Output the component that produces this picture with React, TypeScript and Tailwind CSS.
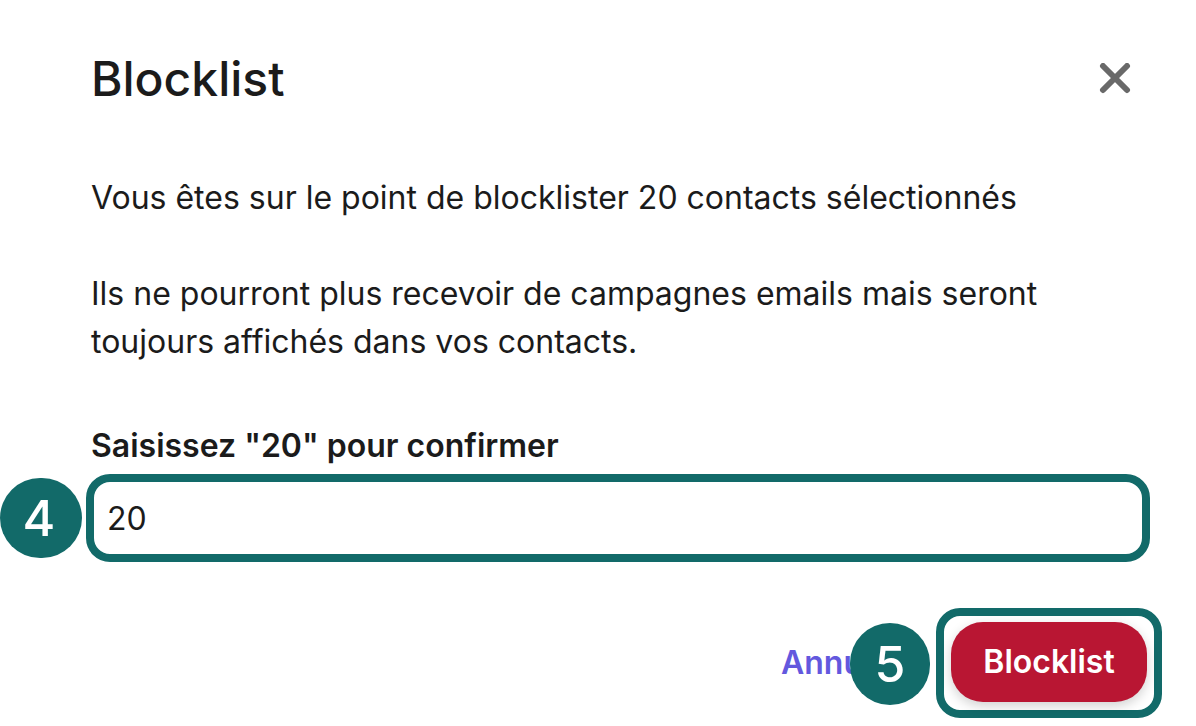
import { useState } from "react";

const stepBadge =
  "pointer-events-none absolute flex items-center justify-center rounded-full bg-[#126a69] text-[50px] font-medium text-white";

function App() {
  const [value, setValue] = useState("20");

  return (
    <div
      role="dialog"
      aria-labelledby="title"
      className="min-h-screen w-full bg-white pt-12 pr-[34px] pl-[86px] font-['Inter',sans-serif] text-[#1b1b1b]"
    >
      <header className="flex items-center justify-between pr-[27px] pl-[5px]">
        <h1 id="title" className="text-5xl leading-[62px] font-medium">
          Blocklist
        </h1>
        <button
          type="button"
          aria-label="Fermer"
          className="flex size-10 items-center justify-center text-[#696969]"
        >
          <svg
            viewBox="0 0 32 32"
            className="size-8"
            fill="none"
            stroke="currentColor"
            strokeWidth="6"
            strokeLinecap="round"
          >
            <path d="M4 3 28 27M28 3 4 27" />
          </svg>
        </button>
      </header>

      <div className="mt-16 space-y-12 pl-[5px] text-[32px] leading-12">
        <p>Vous êtes sur le point de blocklister 20 contacts sélectionnés</p>
        <p>
          Ils ne pourront plus recevoir de campagnes emails mais seront
          <br />
          toujours affichés dans vos contacts.
        </p>
      </div>

      <form className="mt-14 pr-3" onSubmit={(e) => e.preventDefault()}>
        <label htmlFor="confirm" className="block pl-[5px] text-[32px] leading-12 font-semibold">
          Saisissez "20" pour confirmer
        </label>
        <div className="relative mt-1">
          <input
            id="confirm"
            type="text"
            value={value}
            onChange={(e) => setValue(e.target.value)}
            className="block h-[88px] w-full rounded-3xl border-8 border-[#126a69] px-[13px] text-[32px] outline-none"
          />
          <span className={`${stepBadge} top-1 -left-[86px] h-20 w-[82px] pr-1`}>4</span>
        </div>
      </form>

      <footer className="mt-[46px] flex items-center justify-end text-[32px] font-semibold">
        <div className="relative mr-[33px]">
          <button type="button" className="block text-[#6358de]">
            Annuler
          </button>
          {/* step marker sits on top of the cancel button */}
          <span className={`${stepBadge} -top-4 left-[69px] h-[82px] w-20`}>5</span>
        </div>
        <div className="rounded-3xl border-8 border-[#126a69] px-[7px] pt-1.5 pb-2">
          <button
            type="button"
            className="block h-20 w-49 rounded-[32px] bg-[#b91633] text-white shadow-[0_4px_12px_rgba(0,0,0,0.18)]"
          >
            Blocklist
          </button>
        </div>
      </footer>
    </div>
  );
}

export default App;
